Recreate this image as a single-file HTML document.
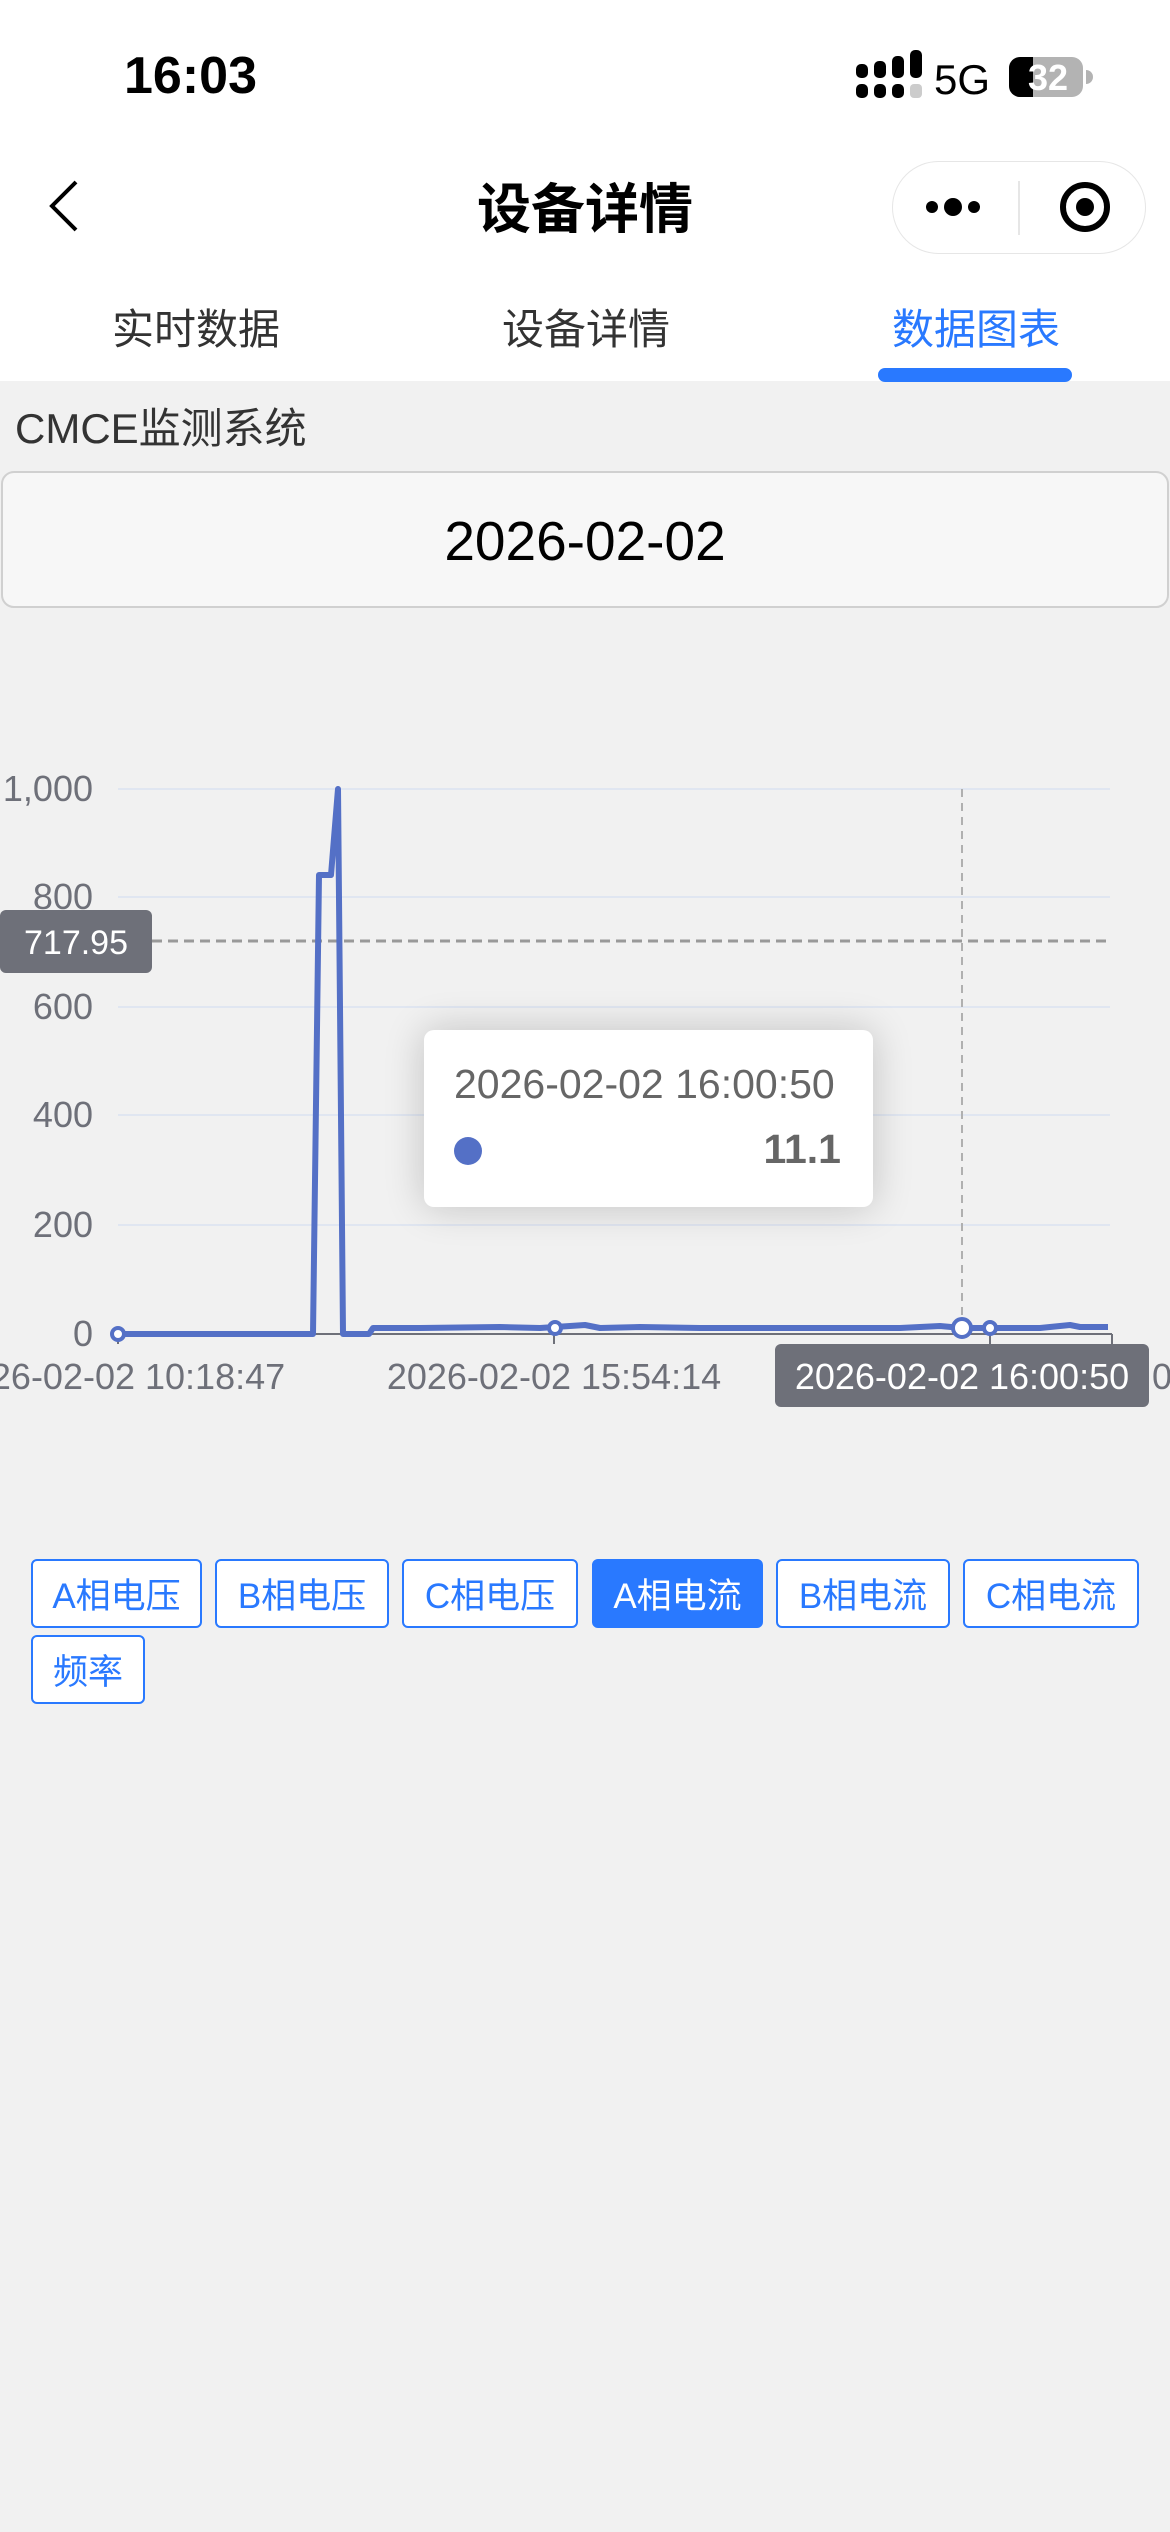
<!DOCTYPE html>
<html><head><meta charset="utf-8"><style>
*{margin:0;padding:0;box-sizing:border-box}
body{width:1170px;height:2532px;background:#f1f1f1;font-family:"Liberation Sans","Noto Sans CJK SC",sans-serif;position:relative;overflow:hidden}
.abs{position:absolute}
.hdr{left:0;top:0;width:1170px;height:381px;background:#fff}
.btn{position:absolute;height:69px;border:2px solid #2979ff;border-radius:6px;color:#2979ff;font-size:35px;display:flex;align-items:center;justify-content:center;background:#fff}
.sel{background:#2979ff;color:#fff}
</style></head><body>
<div class="abs hdr"></div>
<div class="abs" style="left:124px;top:46px;font-size:52px;font-weight:bold;color:#000">16:03</div>
<svg class="abs" style="left:850px;top:50px" width="250" height="56">
<g fill="#000"><rect x="6" y="14" width="12" height="14" rx="5"/><rect x="6" y="34" width="12" height="14" rx="5"/>
<rect x="24" y="11" width="12" height="17" rx="5"/><rect x="24" y="34" width="12" height="14" rx="5"/>
<rect x="42" y="6" width="12" height="22" rx="5"/><rect x="42" y="34" width="12" height="14" rx="5"/>
<rect x="60" y="0" width="12" height="28" rx="5"/></g><rect x="60" y="34" width="12" height="14" rx="4" fill="#ccc"/>
<text x="84" y="44" font-size="42" font-family="Liberation Sans">5G</text>
<rect x="159" y="7" width="74" height="40" rx="11" fill="#b3b3b3"/>
<path d="M170 7h13v40h-13a11 11 0 0 1-11-11v-18a11 11 0 0 1 11-11z" fill="#000"/>
<text x="178" y="40" font-size="36" font-weight="bold" fill="#fff" font-family="Liberation Sans">32</text>
<path d="M236 20a7 7 0 0 1 0 14z" fill="#b3b3b3"/>
</svg>
<svg class="abs" style="left:44px;top:178px" width="40" height="56"><path d="M32 4L8 28l24 24" stroke="#000" stroke-width="4" fill="none"/></svg>
<div class="abs" style="left:0;width:1170px;top:165px;text-align:center;font-size:54px;font-weight:bold;color:#000">设备详情</div>
<div class="abs" style="left:892px;top:161px;width:254px;height:93px;border:1px solid #e6e6e6;border-radius:47px;background:#fff"></div>
<svg class="abs" style="left:892px;top:161px" width="254" height="93">
<circle cx="40" cy="46" r="6"/><circle cx="61" cy="46" r="9"/><circle cx="82" cy="46" r="6"/>
<line x1="127" y1="20" x2="127" y2="74" stroke="#e6e6e6" stroke-width="2"/>
<circle cx="193" cy="46" r="22" fill="none" stroke="#000" stroke-width="6"/><circle cx="193" cy="46" r="9"/>
</svg>
<div class="abs" style="left:112px;top:296px;font-size:42px;color:#333">实时数据</div>
<div class="abs" style="left:502px;top:296px;font-size:42px;color:#333">设备详情</div>
<div class="abs" style="left:892px;top:296px;font-size:42px;color:#2979ff">数据图表</div>
<div class="abs" style="left:878px;top:368px;width:194px;height:14px;border-radius:7px;background:#2979ff"></div>
<div class="abs" style="left:15px;top:395px;font-size:42px;color:#333">CMCE监测系统</div>
<div class="abs" style="left:1px;top:471px;width:1168px;height:137px;background:#f7f7f7;border:2px solid #d0d0d0;border-radius:13px;text-align:center;line-height:137px;font-size:55px;color:#000">2026-02-02</div>
<svg class="abs" style="left:0;top:0" width="1170" height="1450" font-family="Liberation Sans">
<g stroke="#e0e6f1" stroke-width="2"><line x1="118" y1="789" x2="1110" y2="789"/><line x1="118" y1="897" x2="1110" y2="897"/><line x1="118" y1="1007" x2="1110" y2="1007"/><line x1="118" y1="1115" x2="1110" y2="1115"/><line x1="118" y1="1225" x2="1110" y2="1225"/></g>
<g fill="#6e7079" font-size="36" text-anchor="end"><text x="93" y="801">1,000</text><text x="93" y="909">800</text><text x="93" y="1019">600</text><text x="93" y="1127">400</text><text x="93" y="1237">200</text><text x="93" y="1346">0</text></g>
<line x1="118" y1="1334" x2="1112" y2="1334" stroke="#6e7079" stroke-width="2"/>
<g stroke="#6e7079" stroke-width="2"><line x1="118" y1="1334" x2="118" y2="1344"/><line x1="554" y1="1334" x2="554" y2="1344"/><line x1="990" y1="1334" x2="990" y2="1344"/><line x1="1112" y1="1334" x2="1112" y2="1344"/></g>
<line x1="962" y1="789" x2="962" y2="1334" stroke="#b0b0b0" stroke-width="2" stroke-dasharray="8,6"/>
<line x1="152" y1="941" x2="1110" y2="941" stroke="#999" stroke-width="3" stroke-dasharray="10,6"/>
<polyline fill="none" stroke="#5470c6" stroke-width="6" stroke-linejoin="round" points="118,1334 313,1334 319,875 331,875 338,789 343,1334 369,1334 373,1328 420,1328 500,1327 540,1328 555,1327 585,1325 600,1328 640,1327 700,1328 800,1328 900,1328 940,1326 962,1328 990,1328 1040,1328 1070,1325 1080,1327 1108,1327"/>
<g fill="#fff" stroke="#5470c6" stroke-width="4"><circle cx="118" cy="1334" r="6"/><circle cx="555" cy="1328" r="6"/><circle cx="962" cy="1328" r="9"/><circle cx="990" cy="1328" r="6"/></g>
<g fill="#6e7079" font-size="36" text-anchor="middle"><text x="118" y="1389">2026-02-02 10:18:47</text><text x="554" y="1389">2026-02-02 15:54:14</text><text x="1162" y="1389">0</text></g>
<rect x="0" y="910" width="152" height="63" rx="6" fill="#6e7079"/>
<text x="76" y="954" fill="#fff" font-size="34" text-anchor="middle">717.95</text>
<rect x="775" y="1344" width="374" height="63" rx="6" fill="#6e7079"/>
<text x="962" y="1389" fill="#fff" font-size="36" text-anchor="middle">2026-02-02 16:00:50</text>
</svg>
<div class="abs" style="left:424px;top:1030px;width:449px;height:177px;background:#fff;border-radius:10px;box-shadow:0 0 40px rgba(0,0,0,0.2)"></div>
<div class="abs" style="left:454px;top:1061px;font-size:41px;color:#666">2026-02-02 16:00:50</div>
<div class="abs" style="left:454px;top:1137px;width:28px;height:28px;border-radius:50%;background:#5470c6"></div>
<div class="abs" style="left:700px;width:141px;top:1126px;text-align:right;font-size:41px;font-weight:bold;color:#666">11.1</div>
<div class="btn" style="left:31px;top:1559px;width:171px">A相电压</div>
<div class="btn" style="left:215px;top:1559px;width:174px">B相电压</div>
<div class="btn" style="left:402px;top:1559px;width:176px">C相电压</div>
<div class="btn sel" style="left:592px;top:1559px;width:171px">A相电流</div>
<div class="btn" style="left:776px;top:1559px;width:174px">B相电流</div>
<div class="btn" style="left:963px;top:1559px;width:176px">C相电流</div>
<div class="btn" style="left:31px;top:1635px;width:114px">频率</div>
</body></html>
